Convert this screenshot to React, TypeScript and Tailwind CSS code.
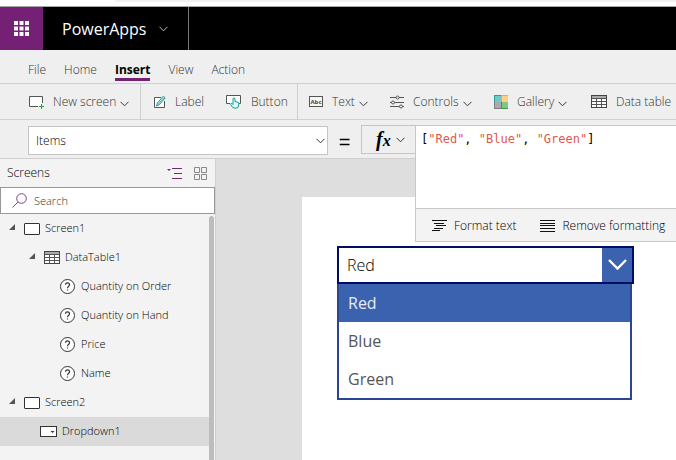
import { useState } from "react";
import type { ReactNode } from "react";

function Chevron({ className = "" }: { className?: string }) {
  return (
    <svg viewBox="0 0 9 6" className={`h-[6px] w-[9px] shrink-0 ${className}`} fill="none" stroke="currentColor" aria-hidden="true">
      <path d="M0.5 0.8 4.5 4.8 8.5 0.8" />
    </svg>
  );
}

function NewScreenIcon() {
  return (
    <svg viewBox="0 0 15 14" className="h-[14px] w-[15px] shrink-0" fill="none" aria-hidden="true">
      <path d="M9 11.5H0.5V1.5H13.5V8" fill="#fff" stroke="#555" />
      <path d="M12.5 9V14M10 11.5H15" stroke="#2e9e3f" />
    </svg>
  );
}

function LabelIcon() {
  return (
    <svg viewBox="0 0 12 14" className="h-[14px] w-[12px] shrink-0" fill="none" aria-hidden="true">
      <path d="M7 2.5H0.5V12.5H10.5V6" fill="#fff" stroke="#555" />
      <path d="M2.5 11 3.3 8 9.3 1.2 11.2 2.9 5.2 9.8Z" fill="#d5f1f1" stroke="#1b9a9a" />
      <path d="M4 9.5 10 2.5" stroke="#1b9a9a" strokeWidth="0.7" />
    </svg>
  );
}

function ButtonIcon() {
  return (
    <svg viewBox="0 0 16 15" className="h-[15px] w-[16px] shrink-0" fill="none" aria-hidden="true">
      <path d="M4 9.5H0.5V1.5H14.5V9.5H13" fill="#fff" stroke="#555" />
      <path d="M7 9V4.5Q8 3.3 9 4.5V7.5L12 8.2Q13.2 8.6 12.9 10L12 13.5Q9.5 15 6.8 13.5L4.5 10.3Q5 8.8 6.3 9.7L7 10.5Z" fill="#e4f7f7" stroke="#129b9b" />
    </svg>
  );
}

function AbcIcon() {
  return (
    <svg viewBox="0 0 14 11" className="h-[11px] w-[14px] shrink-0" aria-hidden="true">
      <rect x="0.5" y="0.5" width="13" height="10" fill="#f7f7f7" stroke="#555" />
      <text x="7" y="8" textAnchor="middle" className="fill-[#444] font-['Open_Sans',sans-serif] text-[6px] font-bold">Abc</text>
    </svg>
  );
}

function ControlsIcon() {
  return (
    <svg viewBox="0 0 14 14" className="h-[14px] w-[14px] shrink-0" fill="#efefef" stroke="#555" aria-hidden="true">
      <path d="M0 2.5H14M0 7.5H14M0 11.5H14" />
      <circle cx="7.5" cy="2.5" r="1.5" />
      <circle cx="3" cy="7.5" r="1.5" />
      <circle cx="11" cy="11.5" r="1.5" />
    </svg>
  );
}

function GalleryIcon() {
  return (
    <svg viewBox="0 0 14 14" className="h-[14px] w-[14px] shrink-0" aria-hidden="true">
      <rect width="14" height="14" fill="#2a9d9d" />
      <rect x="1" y="1" width="6" height="6" fill="#6fcaca" />
      <rect x="7" width="7" height="7" fill="#f5a93c" />
      <rect x="8" y="1" width="6" height="6" fill="#ffd083" />
      <rect y="7" width="7" height="7" fill="#7d7d7d" />
      <rect x="1" y="7" width="6" height="6" fill="#ababab" />
      <rect x="7" y="7" width="7" height="7" fill="#429a48" />
      <rect x="8" y="7" width="6" height="6" fill="#83c488" />
    </svg>
  );
}

function TableIcon() {
  return (
    <svg viewBox="0 0 16 13" className="h-[13px] w-[16px] shrink-0" aria-hidden="true">
      <rect x="0.5" y="0.5" width="15" height="12" fill="#fff" stroke="#444" />
      <rect x="1" y="1" width="14" height="2" fill="#aaa" />
      <path d="M1 3.5H15M1 6.5H15M1 9.5H15M5.5 3.5V12.5M10.5 3.5V12.5" stroke="#555" fill="none" />
    </svg>
  );
}

function ScreenIcon() {
  return (
    <svg viewBox="0 0 16 12" className="h-[12px] w-[16px] shrink-0" aria-hidden="true">
      <rect x="0.5" y="0.5" width="15" height="11" rx="0.5" fill="#fff" stroke="#333" />
    </svg>
  );
}

function HelpIcon() {
  return (
    <svg viewBox="0 0 15 15" className="h-[15px] w-[15px] shrink-0" fill="none" stroke="#333" aria-hidden="true">
      <circle cx="7.5" cy="7.5" r="7" fill="#fff" />
      <path d="M5.500 5.800Q5.500 3.900 7.500 3.900T9.500 5.800Q9.500 6.800 8.500 7.400T7.500 9.300M7.500 10.500V11.600" strokeWidth="1.2" />
    </svg>
  );
}

function DropdownIcon() {
  return (
    <svg viewBox="0 0 17 11" className="h-[11px] w-[17px] shrink-0" aria-hidden="true">
      <rect x="0.5" y="0.5" width="16" height="10" fill="#fff" stroke="#333" />
      <path d="M10.5 5H14.5L12.5 7Z" fill="#333" />
    </svg>
  );
}

function Expander() {
  return (
    <svg viewBox="0 0 6 6" className="h-[6px] w-[6px] shrink-0" aria-hidden="true">
      <path d="M6 0V6H0Z" fill="#555" />
    </svg>
  );
}

function Tool({ icon, label, menu, className }: { icon: ReactNode; label: string; menu?: boolean; className: string }) {
  return (
    <button type="button" className={`flex shrink-0 items-center gap-[9px] whitespace-nowrap ${className}`}>
      {icon}
      <span className="flex items-center gap-1">
        {label}
        {menu && <Chevron className="mt-1" />}
      </span>
    </button>
  );
}

const tabs = ["File", "Home", "Insert", "View", "Action"];

const tree = [
  { label: "Screen1", icon: <ScreenIcon />, open: true, className: "gap-[5px] pl-[9px]" },
  { label: "DataTable1", icon: <TableIcon />, open: true, className: "gap-[5px] pl-[29px]" },
  { label: "Quantity on Order", icon: <HelpIcon />, className: "gap-[6px] pl-[60px]" },
  { label: "Quantity on Hand", icon: <HelpIcon />, className: "gap-[6px] pl-[60px]" },
  { label: "Price", icon: <HelpIcon />, className: "gap-[6px] pl-[60px]" },
  { label: "Name", icon: <HelpIcon />, className: "gap-[6px] pl-[60px]" },
  { label: "Screen2", icon: <ScreenIcon />, open: true, className: "gap-[5px] pl-[9px]" },
  { label: "Dropdown1", icon: <DropdownIcon />, selected: true, className: "gap-[5px] pl-[40px]" },
];

const colours = ["Red", "Blue", "Green"];

function FormulaEditor() {
  return (
    <div className="absolute top-[5px] right-0 left-[415px] z-10 border border-r-0 border-[#c8c8c8] bg-white">
      <div className="relative h-[82px] font-['DejaVu_Sans_Mono',monospace] text-[12px] leading-4">
        <pre aria-hidden="true" className="px-[5px] py-[5px] font-[inherit] text-black">
          [<span className="text-[#e2574c]">"Red"</span>, <span className="text-[#e2574c]">"Blue"</span>, <span className="text-[#e2574c]">"Green"</span>]
        </pre>
        <textarea
          aria-label="Formula"
          spellCheck={false}
          readOnly
          defaultValue={'["Red", "Blue", "Green"]'}
          className="absolute inset-0 resize-none bg-transparent px-[5px] py-[5px] text-transparent caret-black outline-none"
        />
      </div>
      <div className="flex h-[33px] items-center gap-6 overflow-hidden border-t border-[#c8c8c8] bg-[#f3f3f3] pt-[2px] pl-4 text-[12px] font-light whitespace-nowrap text-black">
        <button type="button" className="flex items-center gap-[7px]">
          <svg viewBox="0 0 15 12" className="h-[12px] w-[15px]" stroke="#111" aria-hidden="true">
            <path d="M0 0.500H15M2 3.500H12M4 5.500H14M2 8.500H11M0 10.500H8" />
          </svg>
          Format text
        </button>
        <button type="button" className="flex items-center gap-[7px]">
          <svg viewBox="0 0 15 12" className="h-[12px] w-[15px]" stroke="#111" aria-hidden="true">
            <path d="M0 0.500H15M0 3.500H15M0 5.500H15M0 8.500H15M0 11.500H15" />
          </svg>
          Remove formatting
        </button>
      </div>
    </div>
  );
}

export default function App() {
  const [choice, setChoice] = useState("Red");
  return (
    <div className="flex min-h-screen flex-col overflow-hidden bg-[#efefef] font-['Open_Sans','Noto_Sans',sans-serif] text-[12px] text-[#333]">
      <div className="h-[7px] border-b border-[#a8a8a8] bg-white pl-[115px]">
        <div className="h-[2px] rounded-bl-lg bg-[#f1f1f1]" />
      </div>
      <header className="flex h-[43px] bg-black text-white">
        <button type="button" aria-label="App launcher" className="flex w-[43px] items-center justify-center bg-[#742074]">
          <svg viewBox="0 0 15 15" className="h-[15px] w-[15px]" fill="#fff" aria-hidden="true">
            <path d="M0 0h4v4H0zM5.500 0h4v4h-4zM11 0h4v4h-4zM0 5.500h4v4H0zM5.500 5.500h4v4h-4zM11 5.500h4v4h-4zM0 11h4v4H0zM5.500 11h4v4h-4zM11 11h4v4h-4z" />
          </svg>
        </button>
        <button type="button" className="flex w-[146px] items-center gap-3 border-r border-[#777] pl-[19px] text-[16px]">
          PowerApps
          <Chevron className="text-[#bbb]" />
        </button>
      </header>

      <nav className="flex h-[34px] items-end gap-[18px] border-b border-[#cfcfcf] pb-[2px] pl-7 font-light">
        {tabs.map((tab) => (
          <button
            key={tab}
            type="button"
            className={`border-b-[3px] leading-4 ${tab === "Insert" ? "border-[#742074] font-bold text-black" : "border-transparent"}`}
          >
            {tab}
          </button>
        ))}
      </nav>

      <div className="flex h-[36px] overflow-hidden border-b border-[#cfcfcf] font-light">
        <Tool icon={<NewScreenIcon />} label="New screen" menu className="w-[141px] border-r border-[#cfcfcf] pl-[29px]" />
        <Tool icon={<LabelIcon />} label="Label" className="w-[85px] pl-[13px]" />
        <Tool icon={<ButtonIcon />} label="Button" className="w-[72px] border-r border-[#cfcfcf]" />
        <Tool icon={<AbcIcon />} label="Text" menu className="w-[92px] pl-[11px]" />
        <Tool icon={<ControlsIcon />} label="Controls" menu className="w-[104px]" />
        <Tool icon={<GalleryIcon />} label="Gallery" menu className="w-[97px]" />
        <Tool icon={<TableIcon />} label="Data table" className="" />
      </div>

      <div className="relative flex h-[39px] items-start border-b border-[#cfcfcf] pt-[5px]">
        <div className="relative mt-[1px] ml-7 h-[29px] w-[300px]">
          <select aria-label="Property" className="h-full w-full appearance-none border border-[#c4c4c4] bg-white pl-[7px] text-[12px] font-light text-black">
            <option>Items</option>
          </select>
          <Chevron className="pointer-events-none absolute top-3 right-[3px]" />
        </div>
        <span className="w-[33px] text-center font-['Liberation_Sans',sans-serif] text-[20px] leading-[34px] text-black">=</span>
        <button type="button" aria-label="Functions" className="flex h-[29px] w-[54px] items-center gap-[5px] border border-r-0 border-[#c4c4c4] pl-[14px]">
          <span className="font-['Liberation_Serif',serif] text-[20px] leading-5 font-bold text-black italic">
            f<span className="text-[16px]">x</span>
          </span>
          <Chevron />
        </button>
        <FormulaEditor />
      </div>

      <div className="flex flex-1">
        <aside className="w-[216px] shrink-0 border-r border-[#cfcfcf] bg-[#f3f3f3] font-light">
          <div className="flex h-7 items-center pr-2 pl-[7px] text-black">
            <h2 className="flex-1">Screens</h2>
            <button type="button" aria-label="Tree view" className="mr-3">
              <svg viewBox="0 0 15 11" className="h-[11px] w-[15px]" stroke="#742774" fill="none" aria-hidden="true">
                <path d="M5 0.500H15M7 5.500H15M5 10.500H15" />
                <path d="M0 1H4L2 3Z" fill="#742774" stroke="none" />
              </svg>
            </button>
            <button type="button" aria-label="Thumbnail view">
              <svg viewBox="0 0 13 13" className="h-[13px] w-[13px]" stroke="#888" fill="none" aria-hidden="true">
                <path d="M0.500 0.500h5v5h-5zM7.500 0.500h5v5h-5zM0.500 7.500h5v5h-5zM7.500 7.500h5v5h-5z" />
              </svg>
            </button>
          </div>
          <label className="flex h-[27px] items-center gap-[7px] border border-[#999] bg-white pl-[11px]">
            <svg viewBox="0 0 15 15" className="h-[15px] w-[15px] shrink-0" stroke="#8a3a8a" fill="none" aria-hidden="true">
              <circle cx="9.500" cy="5.500" r="4.800" />
              <path d="M6 9 0.500 14.500" />
            </svg>
            <input type="search" aria-label="Search" placeholder="Search" className="w-full pt-[2px] text-[11px] outline-none placeholder:text-[#333]" />
          </label>
          <div className="flex">
            <ul className="flex-1 text-[11px] text-black">
              {tree.map((row) => (
                <li key={row.label} className={row.selected ? "bg-[#dadada]" : ""}>
                  <button type="button" className={`flex h-[29px] w-full items-center whitespace-nowrap ${row.className}`}>
                    {row.open && (
                      <span className="mr-1 mb-1">
                        <Expander />
                      </span>
                    )}
                    {row.icon}
                    {row.label}
                  </button>
                </li>
              ))}
            </ul>
            <div className="-mb-4 mt-[2px] w-[5px] rounded-t-full bg-[#bdbdbd]" />
            <div className="w-[1px]" />
          </div>
        </aside>

        <main className="flex flex-1 bg-[#dedede] pt-[38px] pl-[86px]">
          <section aria-label="Screen2" className="flex-1 bg-white pt-[49px] pl-[35px]">
            <div className="relative w-[297px] border-2 border-[#000c66] bg-white">
              <select
                aria-label="Dropdown1"
                value={choice}
                onChange={(e) => setChoice(e.target.value)}
                className="block h-[34px] w-full appearance-none pl-2 text-[16px] font-light text-black"
              >
                {colours.map((c) => (
                  <option key={c}>{c}</option>
                ))}
              </select>
              <span className="pointer-events-none absolute inset-y-0 right-0 flex w-[30px] items-center justify-center bg-[#3b62ae]">
                <svg viewBox="0 0 19 12" className="h-[12px] w-[19px]" stroke="#fff" strokeWidth="2.4" fill="none" aria-hidden="true">
                  <path d="M1 1 9.500 9.500 18 1" />
                </svg>
              </span>
            </div>
            <ul role="listbox" aria-label="Colours" className="w-[295px] border-2 border-t-0 border-[#2a4596] bg-white text-[16px] text-[#555]">
              {colours.map((c) => (
                <li
                  key={c}
                  role="option"
                  aria-selected={c === choice}
                  onClick={() => setChoice(c)}
                  className="flex h-[38px] items-center pl-[9px] aria-selected:bg-[#3b62ae] aria-selected:font-medium aria-selected:text-[#e8edf7]"
                >
                  {c}
                </li>
              ))}
            </ul>
          </section>
        </main>
      </div>
    </div>
  );
}
